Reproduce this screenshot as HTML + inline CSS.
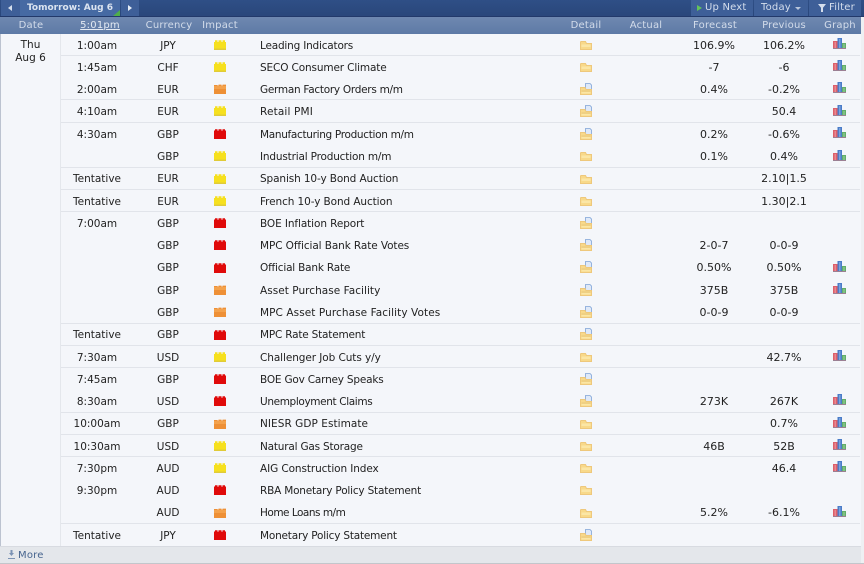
<!DOCTYPE html>
<html><head><meta charset="utf-8"><style>
html,body{margin:0;padding:0;width:864px;height:564px;overflow:hidden;background:#f4f6fa;font-family:"DejaVu Sans",Verdana,sans-serif;font-size:10.5px;color:#222}
div,span,svg{position:absolute}
.h{top:17px;height:16px;line-height:17px;color:#d3dcea;text-align:center;font-size:10px;letter-spacing:.2px;white-space:nowrap}
.l{left:61px;width:799px;height:1px;background:#e1e4ea}
.t{width:90px;height:22px;line-height:22px;margin-top:1px;text-align:center;white-space:nowrap}
.tm{left:52px}.c{left:123px}.n{left:260px;width:310px;text-align:left;letter-spacing:-.15px}.f{left:669px;font-size:11px}.p{left:739px;font-size:11px}
.b{top:0;height:16px;line-height:16px;background:#3e5f98;color:#d5deec;white-space:nowrap;text-align:left;font-size:10px;letter-spacing:.2px}
</style></head><body>
<svg width="0" height="0" style="left:0;top:0"><defs>
<symbol id="y" viewBox="0 0 12 10"><path d="M0 2H1V.2H3.500V2H4.500V.2H7.500V2H8.500V.2H11V2H12V10H0Z" fill="#f6e01e"/><rect y="8.500" width="12" height="1.500" fill="#e0cb38"/></symbol>
<symbol id="r" viewBox="0 0 12 10"><path d="M0 1.500H1V.3H3.500V1.800H4.500V.3H7.500V1.800H8.500V.3H11V1.500H12V10H0Z" fill="#e00a0a"/></symbol>
<symbol id="o" viewBox="0 0 12 10"><path d="M0 1H3.500V1.600H4.500V.6H7.500V1.600H8.500V.6H12V10H0Z" fill="#ee9036"/><rect y="2" width="12" height="3" fill="#f4a24c"/></symbol>
<symbol id="d" viewBox="0 0 12 9"><path d="M.5 1V8.500H11.500V2.500H6.500L5.500 .5H1Z" fill="#f8d98a" stroke="#eec87c"/><rect x="1.500" y="3.500" width="9" height="2.500" fill="#fbe6a6"/></symbol>
<symbol id="e" viewBox="0 0 12 12"><path d="M5.500.5H10L11.500 2V8H5.500Z" fill="#dfe9f8" stroke="#7fa3d6" stroke-width=".8"/><path d="M.5 4.500V11.500H11.500V6.500H6L5 4.500Z" fill="#f8d98a" stroke="#eec87c"/><rect x="1.500" y="7.500" width="9" height="1" fill="#e6c67c"/><rect x="1.500" y="9" width="9" height="1.500" fill="#fbe6a6"/></symbol>
<symbol id="g" viewBox="0 0 13 11"><rect y="3" width="4.500" height="8" fill="#dc5f6a"/><rect x="1.500" y="4" width="1.500" height="6" fill="#e88890"/><rect x="4.500" width="4.500" height="11" fill="#4a7cc8"/><rect x="6" y="1" width="1.500" height="9" fill="#7aa2dc"/><rect x="9" y="5" width="4" height="6" fill="#62ae68"/><rect x="10.300" y="6" width="1.400" height="4" fill="#8cc890"/><rect y="10" width="13" height="1" fill="#9b7f93"/></symbol>
</defs></svg>

<div style="left:0;top:0;width:864px;height:17px;background:linear-gradient(#2f4f86,#29467a)"></div>
<div style="left:0;top:16px;width:864px;height:1px;background:#22396a"></div>
<div style="left:0;top:17px;width:861px;height:17px;background:linear-gradient(#6f88b0,#5d7aa6)"></div>
<div style="left:861px;top:17px;width:3px;height:547px;background:#eef0f3"></div>
<div style="left:0;top:34px;width:1px;height:512px;background:#bcc3d0"></div>
<div style="left:60px;top:34px;width:1px;height:512px;background:#e4e7ec"></div>

<div class="b" style="left:1px;width:19px"></div>
<div style="left:8px;top:5px;width:0;height:0;border:3.500px solid transparent;border-right:4px solid #d5deec;border-left:0"></div>
<div class="b" style="left:20px;width:100px;background:#466aa3;font-weight:bold;font-size:9px;letter-spacing:0;color:#dbe4f0;text-align:center">Tomorrow: Aug 6</div>
<div style="left:113px;top:10px;width:0;height:0;border-bottom:6px solid #4fae4a;border-left:7px solid transparent"></div>
<div class="b" style="left:121px;width:18px"></div>
<div style="left:128px;top:5px;width:0;height:0;border:3.500px solid transparent;border-left:4px solid #e6edf6;border-right:0"></div>
<div class="b" style="left:691px;width:62px;text-indent:14px">Up Next</div>
<div style="left:697px;top:5px;width:0;height:0;border:3.500px solid transparent;border-left:5px solid #63c35a;border-right:0"></div>
<div class="b" style="left:754px;width:54px;text-indent:7px">Today</div>
<div style="left:795px;top:7px;width:0;height:0;border:3px solid transparent;border-top:3px solid #b9c7dc;border-bottom:0"></div>
<div class="b" style="left:809px;width:52px;text-indent:20px">Filter</div>
<div style="left:818px;top:4px;width:0;height:0;border:4px solid transparent;border-top:5px solid #d5deec;border-bottom:0"></div>
<div style="left:821px;top:8px;width:2px;height:4px;background:#d5deec"></div>

<div class="h" style="left:11px;width:40px">Date</div>
<div class="h" style="left:70px;width:60px;text-decoration:underline;color:#e3e9f2">5:01pm</div>
<div class="h" style="left:139px;width:60px">Currency</div>
<div class="h" style="left:195px;width:50px">Impact</div>
<div class="h" style="left:566px;width:40px">Detail</div>
<div class="h" style="left:626px;width:40px">Actual</div>
<div class="h" style="left:689px;width:52px">Forecast</div>
<div class="h" style="left:758px;width:52px">Previous</div>
<div class="h" style="left:820px;width:40px">Graph</div>

<div style="left:1px;top:39px;width:59px;text-align:center;line-height:12.500px">Thu<br>Aug 6</div>

<div class="l" style="top:55px"></div><div class="l" style="top:99px"></div><div class="l" style="top:122px"></div><div class="l" style="top:167px"></div><div class="l" style="top:189px"></div><div class="l" style="top:211px"></div><div class="l" style="top:323px"></div><div class="l" style="top:345px"></div><div class="l" style="top:367px"></div><div class="l" style="top:412px"></div><div class="l" style="top:434px"></div><div class="l" style="top:456px"></div><div class="l" style="top:523px"></div>

<div class="t tm" style="top:34px">1:00am</div><div class="t c" style="top:34px">JPY</div><div class="t n" style="top:34px;letter-spacing:-.2px">Leading Indicators</div><div class="t f" style="top:34px">106.9%</div><div class="t p" style="top:34px">106.2%</div>
<div class="t tm" style="top:56px">1:45am</div><div class="t c" style="top:56px">CHF</div><div class="t n" style="top:56px;letter-spacing:-.14px">SECO Consumer Climate</div><div class="t f" style="top:56px">-7</div><div class="t p" style="top:56px">-6</div>
<div class="t tm" style="top:78px">2:00am</div><div class="t c" style="top:78px">EUR</div><div class="t n" style="top:78px;letter-spacing:-.28px">German Factory Orders m/m</div><div class="t f" style="top:78px">0.4%</div><div class="t p" style="top:78px">-0.2%</div>
<div class="t tm" style="top:100px">4:10am</div><div class="t c" style="top:100px">EUR</div><div class="t n" style="top:100px;letter-spacing:.15px">Retail PMI</div><div class="t p" style="top:100px">50.4</div>
<div class="t tm" style="top:123px">4:30am</div><div class="t c" style="top:123px">GBP</div><div class="t n" style="top:123px;letter-spacing:-.32px">Manufacturing Production m/m</div><div class="t f" style="top:123px">0.2%</div><div class="t p" style="top:123px">-0.6%</div>
<div class="t c" style="top:145px">GBP</div><div class="t n" style="top:145px;letter-spacing:-.18px">Industrial Production m/m</div><div class="t f" style="top:145px">0.1%</div><div class="t p" style="top:145px">0.4%</div>
<div class="t tm" style="top:167px">Tentative</div><div class="t c" style="top:167px">EUR</div><div class="t n" style="top:167px;letter-spacing:-.12px">Spanish 10-y Bond Auction</div><div class="t p" style="top:167px">2.10|1.5</div>
<div class="t tm" style="top:190px">Tentative</div><div class="t c" style="top:190px">EUR</div><div class="t n" style="top:190px;letter-spacing:-.1px">French 10-y Bond Auction</div><div class="t p" style="top:190px">1.30|2.1</div>
<div class="t tm" style="top:212px">7:00am</div><div class="t c" style="top:212px">GBP</div><div class="t n" style="top:212px;letter-spacing:-.1px">BOE Inflation Report</div>
<div class="t c" style="top:234px">GBP</div><div class="t n" style="top:234px;letter-spacing:-.1px">MPC Official Bank Rate Votes</div><div class="t f" style="top:234px">2-0-7</div><div class="t p" style="top:234px">0-0-9</div>
<div class="t c" style="top:256px">GBP</div><div class="t n" style="top:256px;letter-spacing:-.2px">Official Bank Rate</div><div class="t f" style="top:256px">0.50%</div><div class="t p" style="top:256px">0.50%</div>
<div class="t c" style="top:279px">GBP</div><div class="t n" style="top:279px;letter-spacing:.04px">Asset Purchase Facility</div><div class="t f" style="top:279px">375B</div><div class="t p" style="top:279px">375B</div>
<div class="t c" style="top:301px">GBP</div><div class="t n" style="top:301px;letter-spacing:.08px">MPC Asset Purchase Facility Votes</div><div class="t f" style="top:301px">0-0-9</div><div class="t p" style="top:301px">0-0-9</div>
<div class="t tm" style="top:323px">Tentative</div><div class="t c" style="top:323px">GBP</div><div class="t n" style="top:323px;letter-spacing:-.2px">MPC Rate Statement</div>
<div class="t tm" style="top:346px">7:30am</div><div class="t c" style="top:346px">USD</div><div class="t n" style="top:346px;letter-spacing:-.08px">Challenger Job Cuts y/y</div><div class="t p" style="top:346px">42.7%</div>
<div class="t tm" style="top:368px">7:45am</div><div class="t c" style="top:368px">GBP</div><div class="t n" style="top:368px;letter-spacing:-.2px">BOE Gov Carney Speaks</div>
<div class="t tm" style="top:390px">8:30am</div><div class="t c" style="top:390px">USD</div><div class="t n" style="top:390px;letter-spacing:-.37px">Unemployment Claims</div><div class="t f" style="top:390px">273K</div><div class="t p" style="top:390px">267K</div>
<div class="t tm" style="top:412px">10:00am</div><div class="t c" style="top:412px">GBP</div><div class="t n" style="top:412px;letter-spacing:.05px">NIESR GDP Estimate</div><div class="t p" style="top:412px">0.7%</div>
<div class="t tm" style="top:435px">10:30am</div><div class="t c" style="top:435px">USD</div><div class="t n" style="top:435px;letter-spacing:-.2px">Natural Gas Storage</div><div class="t f" style="top:435px">46B</div><div class="t p" style="top:435px">52B</div>
<div class="t tm" style="top:457px">7:30pm</div><div class="t c" style="top:457px">AUD</div><div class="t n" style="top:457px;letter-spacing:-.1px">AIG Construction Index</div><div class="t p" style="top:457px">46.4</div>
<div class="t tm" style="top:479px">9:30pm</div><div class="t c" style="top:479px">AUD</div><div class="t n" style="top:479px;letter-spacing:-.2px">RBA Monetary Policy Statement</div>
<div class="t c" style="top:501px">AUD</div><div class="t n" style="top:501px;letter-spacing:-.5px">Home Loans m/m</div><div class="t f" style="top:501px">5.2%</div><div class="t p" style="top:501px">-6.1%</div>
<div class="t tm" style="top:524px">Tentative</div><div class="t c" style="top:524px">JPY</div><div class="t n" style="top:524px;letter-spacing:-.2px">Monetary Policy Statement</div>

<!-- impact -->
<svg style="left:214px;top:40px" width="12" height="10"><use href="#y"/></svg>
<svg style="left:214px;top:62px" width="12" height="10"><use href="#y"/></svg>
<svg style="left:214px;top:84px" width="12" height="10"><use href="#o"/></svg>
<svg style="left:214px;top:106px" width="12" height="10"><use href="#y"/></svg>
<svg style="left:214px;top:129px" width="12" height="10"><use href="#r"/></svg>
<svg style="left:214px;top:151px" width="12" height="10"><use href="#y"/></svg>
<svg style="left:214px;top:174px" width="12" height="10"><use href="#y"/></svg>
<svg style="left:214px;top:196px" width="12" height="10"><use href="#y"/></svg>
<svg style="left:214px;top:218px" width="12" height="10"><use href="#r"/></svg>
<svg style="left:214px;top:240px" width="12" height="10"><use href="#r"/></svg>
<svg style="left:214px;top:263px" width="12" height="10"><use href="#r"/></svg>
<svg style="left:214px;top:285px" width="12" height="10"><use href="#o"/></svg>
<svg style="left:214px;top:307px" width="12" height="10"><use href="#o"/></svg>
<svg style="left:214px;top:330px" width="12" height="10"><use href="#r"/></svg>
<svg style="left:214px;top:352px" width="12" height="10"><use href="#y"/></svg>
<svg style="left:214px;top:374px" width="12" height="10"><use href="#r"/></svg>
<svg style="left:214px;top:396px" width="12" height="10"><use href="#r"/></svg>
<svg style="left:214px;top:419px" width="12" height="10"><use href="#o"/></svg>
<svg style="left:214px;top:441px" width="12" height="10"><use href="#y"/></svg>
<svg style="left:214px;top:463px" width="12" height="10"><use href="#y"/></svg>
<svg style="left:214px;top:485px" width="12" height="10"><use href="#r"/></svg>
<svg style="left:214px;top:508px" width="12" height="10"><use href="#o"/></svg>
<svg style="left:214px;top:530px" width="12" height="10"><use href="#r"/></svg>

<!-- detail -->
<svg style="left:580px;top:41px" width="12" height="9"><use href="#d"/></svg>
<svg style="left:580px;top:63px" width="12" height="9"><use href="#d"/></svg>
<svg style="left:580px;top:83px" width="12" height="12"><use href="#e"/></svg>
<svg style="left:580px;top:105px" width="12" height="12"><use href="#e"/></svg>
<svg style="left:580px;top:128px" width="12" height="12"><use href="#e"/></svg>
<svg style="left:580px;top:152px" width="12" height="9"><use href="#d"/></svg>
<svg style="left:580px;top:175px" width="12" height="9"><use href="#d"/></svg>
<svg style="left:580px;top:197px" width="12" height="9"><use href="#d"/></svg>
<svg style="left:580px;top:217px" width="12" height="12"><use href="#e"/></svg>
<svg style="left:580px;top:239px" width="12" height="12"><use href="#e"/></svg>
<svg style="left:580px;top:261px" width="12" height="12"><use href="#e"/></svg>
<svg style="left:580px;top:284px" width="12" height="12"><use href="#e"/></svg>
<svg style="left:580px;top:306px" width="12" height="12"><use href="#e"/></svg>
<svg style="left:580px;top:328px" width="12" height="12"><use href="#e"/></svg>
<svg style="left:580px;top:353px" width="12" height="9"><use href="#d"/></svg>
<svg style="left:580px;top:373px" width="12" height="12"><use href="#e"/></svg>
<svg style="left:580px;top:395px" width="12" height="12"><use href="#e"/></svg>
<svg style="left:580px;top:420px" width="12" height="9"><use href="#d"/></svg>
<svg style="left:580px;top:442px" width="12" height="9"><use href="#d"/></svg>
<svg style="left:580px;top:464px" width="12" height="9"><use href="#d"/></svg>
<svg style="left:580px;top:486px" width="12" height="9"><use href="#d"/></svg>
<svg style="left:580px;top:509px" width="12" height="9"><use href="#d"/></svg>
<svg style="left:580px;top:529px" width="12" height="12"><use href="#e"/></svg>

<!-- graph -->
<svg style="left:833px;top:38px" width="13" height="11"><use href="#g"/></svg>
<svg style="left:833px;top:60px" width="13" height="11"><use href="#g"/></svg>
<svg style="left:833px;top:82px" width="13" height="11"><use href="#g"/></svg>
<svg style="left:833px;top:105px" width="13" height="11"><use href="#g"/></svg>
<svg style="left:833px;top:127px" width="13" height="11"><use href="#g"/></svg>
<svg style="left:833px;top:150px" width="13" height="11"><use href="#g"/></svg>
<svg style="left:833px;top:261px" width="13" height="11"><use href="#g"/></svg>
<svg style="left:833px;top:283px" width="13" height="11"><use href="#g"/></svg>
<svg style="left:833px;top:350px" width="13" height="11"><use href="#g"/></svg>
<svg style="left:833px;top:394px" width="13" height="11"><use href="#g"/></svg>
<svg style="left:833px;top:417px" width="13" height="11"><use href="#g"/></svg>
<svg style="left:833px;top:439px" width="13" height="11"><use href="#g"/></svg>
<svg style="left:833px;top:461px" width="13" height="11"><use href="#g"/></svg>
<svg style="left:833px;top:506px" width="13" height="11"><use href="#g"/></svg>

<!-- footer -->
<div style="left:0;top:546px;width:861px;height:17px;background:#e4e7eb;border-top:1px solid #d8dbe1;box-sizing:border-box"></div>
<div style="left:0;top:563px;width:864px;height:1px;background:#c3c6cb"></div>
<div style="left:18px;top:548px;line-height:16px;font-size:10px;letter-spacing:.2px;color:#47658f">More</div>
<div style="left:9px;top:550px;width:5px;height:6px;background:#7b93b5;clip-path:polygon(30% 0,70% 0,70% 50%,100% 50%,50% 100%,0 50%,30% 50%)"></div>
<div style="left:8px;top:558px;width:7px;height:1px;background:#7b93b5"></div>
</body></html>
